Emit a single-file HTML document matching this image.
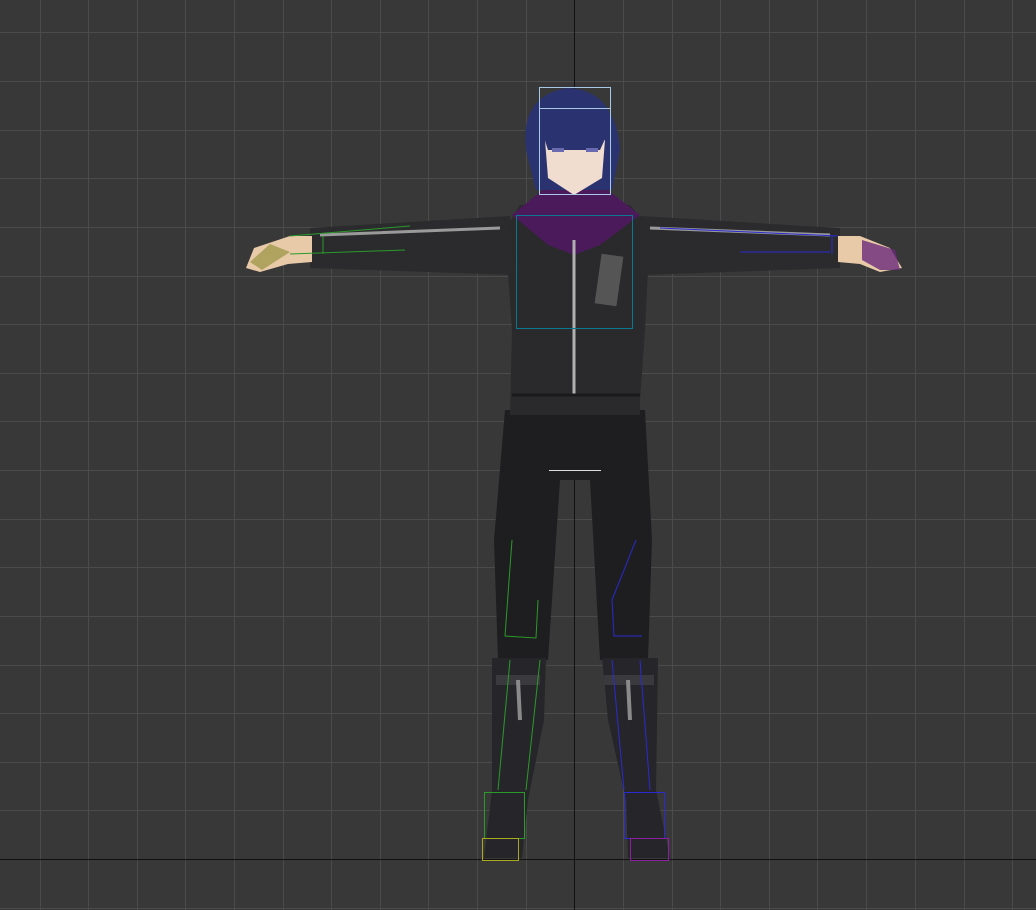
<!DOCTYPE html>
<html><head><meta charset="utf-8"><style>
html,body{margin:0;padding:0;background:#383838;overflow:hidden}
svg{display:block}
</style></head><body>
<svg width="1036" height="910" viewBox="0 0 1036 910" xmlns="http://www.w3.org/2000/svg">
<rect width="1036" height="910" fill="#383838"/>
<g stroke="#4b4b4b" stroke-width="1">
<path d="M40.5 0V910M88.5 0V910M137.5 0V910M185.5 0V910M234.5 0V910M283.5 0V910M331.5 0V910M380.5 0V910M428.5 0V910M477.5 0V910M526.5 0V910M623.5 0V910M672.5 0V910M720.5 0V910M769.5 0V910M817.5 0V910M866.5 0V910M915.5 0V910M964.5 0V910M1012.5 0V910"/>
<path d="M0 32.5H1036M0 81.5H1036M0 130.5H1036M0 178.5H1036M0 227.5H1036M0 276.5H1036M0 324.5H1036M0 373.5H1036M0 421.5H1036M0 470.5H1036M0 519.5H1036M0 567.5H1036M0 616.5H1036M0 665.5H1036M0 713.5H1036M0 762.5H1036M0 810.5H1036M0 908.5H1036"/>
</g>
<path d="M574.5 0V910M0 859.5H1036" stroke="#111" stroke-width="1"/>
<!-- legs -->
<path d="M505 410 L645 410 L652 540 L648 660 L600 660 L590 480 L560 480 L548 660 L498 660 L494 540 Z" fill="#1e1e21"/>
<!-- boots -->
<path d="M492 658 L546 658 L544 720 L528 800 L522 858 L484 858 L492 790 Z" fill="#26262a"/>
<path d="M602 658 L658 658 L656 790 L670 858 L628 858 L626 800 L608 720 Z" fill="#26262a"/>
<rect x="496" y="675" width="44" height="10" fill="#3a3a3e"/>
<rect x="604" y="675" width="50" height="10" fill="#3a3a3e"/>
<path d="M518 680 L520 720 M628 680 L630 720" stroke="#8a8a8a" stroke-width="4"/>
<!-- jacket torso -->
<path d="M520 205 L630 205 L650 230 L645 330 L640 400 L640 415 L510 415 L512 330 L505 230 Z" fill="#2a2a2c"/>
<!-- arms -->
<path d="M310 228 L510 216 L515 275 L310 268 Z" fill="#2b2b2d"/>
<path d="M640 216 L840 228 L840 268 L640 275 Z" fill="#2b2b2d"/>
<path d="M320 235 L500 228 M650 228 L830 235" stroke="#9a9a9a" stroke-width="3"/>
<!-- hands -->
<path d="M290 236 L312 236 L312 262 L288 264 L260 272 L246 268 L254 248 Z" fill="#e8c9a8"/>
<path d="M838 236 L860 236 L890 248 L902 268 L880 272 L860 264 L838 262 Z" fill="#e8c9a8"/>
<path d="M862 240 L895 250 L900 270 L880 270 L862 260Z" fill="#6a2a7a" opacity="0.8"/>
<path d="M250 262 L270 244 L290 252 L262 270Z" fill="#8a8a30" opacity="0.6"/>
<!-- hood -->
<path d="M512 215 L545 188 L605 188 L640 215 L600 245 L574 255 L548 245 Z" fill="#4a1a5a"/>
<!-- zipper -->
<path d="M574 240 V395" stroke="#b0b0b0" stroke-width="3"/>
<rect x="598" y="255" width="22" height="50" fill="#555" transform="rotate(8 609 280)"/>
<path d="M512 395 L640 395" stroke="#1a1a1a" stroke-width="3"/>
<!-- head -->
<path d="M526 150 Q520 95 568 88 Q615 90 620 150 L612 190 L536 190 Z" fill="#2a3370"/>
<path d="M545 140 L605 140 L602 178 L574 195 L548 178 Z" fill="#f0ddd0"/>
<path d="M540 125 Q574 100 610 128 L600 150 L548 150 Z" fill="#2a3370"/>
<path d="M552 150h12M586 150h12" stroke="#6a6ab0" stroke-width="4"/>
<!-- gizmos -->
<g fill="none" stroke-width="1">
<rect x="539.5" y="87.5" width="71" height="107" stroke="#a8c8e8"/>
<path d="M539.5 108.5H610.5" stroke="#a8c8e8"/>
<rect x="516.5" y="215.5" width="116" height="113" stroke="#0a7890"/>
<path d="M549 470.5H601" stroke="#ddd"/>
<path d="M290 236 L410 226 M290 254 L405 250 M323 236V254" stroke="#2a9a2a"/>
<path d="M660 228 L838 236 M740 252 L830 252 M832 236V254" stroke="#2a2ad0"/>
<path d="M512 540 L505 636 L536 638 L538 600" stroke="#2a9a2a"/>
<path d="M636 540 L612 600 L614 636 L642 636" stroke="#2a2ad0"/>
<rect x="484.5" y="792.5" width="40" height="46" stroke="#2a9a2a"/>
<rect x="482.5" y="838.5" width="36" height="22" stroke="#aaaa20"/>
<rect x="624.5" y="792.5" width="40" height="46" stroke="#2a2ad0"/>
<rect x="630.5" y="838.5" width="38" height="22" stroke="#8a20a0"/>
<path d="M510 660 L498 790 M540 660 L526 790" stroke="#2a9a2a"/>
<path d="M612 660 L624 790 M640 660 L650 790" stroke="#2a2ad0"/>
</g>
</svg>
</body></html>
